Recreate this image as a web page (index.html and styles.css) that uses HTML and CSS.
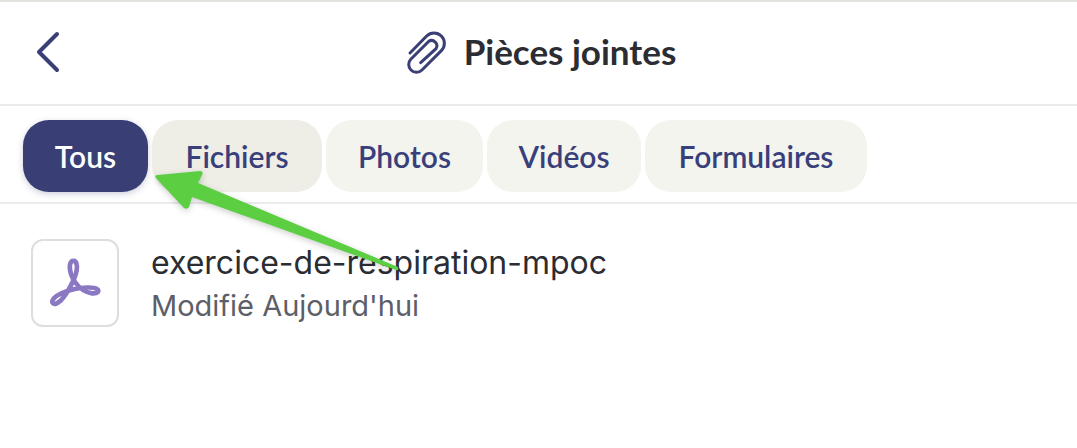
FILE: index.html
```html
<!DOCTYPE html>
<html lang="fr">
<head>
<meta charset="utf-8">
<meta name="viewport" content="width=device-width, initial-scale=1">
<title>Pièces jointes</title>
<link rel="stylesheet" href="styles.css">
</head>
<body>
<header class="header">
  <button class="back" type="button" aria-label="Retour">
    <svg class="back-icon" viewBox="0 0 28 44" aria-hidden="true"><path d="M23 4 5 22 23 40"/></svg>
  </button>
  <div class="heading">
    <svg class="clip-icon" viewBox="33 27 120 126" aria-hidden="true"><path d="M42 93 92 42A31 31 0 0 1 136 86L78 144A23 23 0 0 1 45 111L98 58A16 16 0 0 1 120 80L74 122"/></svg>
    <h1 class="title">Pièces jointes</h1>
  </div>
</header>
<nav class="tabs" aria-label="Filtres">
  <button class="tab tab-active" type="button">Tous</button>
  <button class="tab tab-hover" type="button">Fichiers</button>
  <button class="tab" type="button">Photos</button>
  <button class="tab" type="button">Vidéos</button>
  <button class="tab" type="button">Formulaires</button>
</nav>
<main class="files">
  <article class="file">
    <div class="thumb">
      <svg class="pdf-icon" viewBox="27 27 156 156" aria-hidden="true"><path d="M97 104C109 80 113 65 110 50C108 35 93 35 90 50C88 65 93 84 105 102C119 122 135 133 156 136C173 138 180 128 171 123C160 116 127 118 101 124C75 130 50 142 41 152C33 162 38 170 48 167C67 161 84 130 97 104Z"/></svg>
    </div>
    <div class="file-text">
      <h2 class="file-name">exercice-de-respiration-mpoc</h2>
      <p class="file-date">Modifié Aujourd'hui</p>
    </div>
  </article>
</main>
<svg class="arrow" viewBox="0 0 252 108" aria-hidden="true"><path d="M6 12Q4 9 8 9L50 5Q54 5 52 9L48 17L248 101Q249 105 246 104L42 31L39 41Q37 44 34 42Z"/></svg>
</body>
</html>
```
FILE: styles.css
```css
* { box-sizing: border-box; }
body {
  position: relative;
  margin: 0;
  min-height: 100vh;
  background: #fff;
  color: #2b2d33;
  font-family: Inter, "Liberation Sans", sans-serif;
}
button { border: 0; cursor: pointer; }
svg { display: block; fill: none; }
.header {
  display: grid;
  grid-template-columns: 1fr auto 1fr;
  align-items: center;
  height: 106px;
  padding: 0 26px 2px 32px;
  border-top: 2px solid #e2e2de;
  border-bottom: 2px solid #ebebeb;
}
.back { justify-self: start; padding: 0; background: none; }
.back-icon { width: 32px; height: 44px; }
.back-icon path { stroke: #3a3f75; stroke-width: 4; stroke-linecap: round; stroke-linejoin: round; }
.heading { display: flex; align-items: center; gap: 17px; }
.clip-icon { width: 40px; height: 42px; overflow: visible; }
.clip-icon path { stroke: #3a3f75; stroke-width: 9; stroke-linecap: round; }
.title { margin: 0; padding-bottom: 2px; font: 700 35px/48px Lato, sans-serif; }
.tabs {
  display: grid;
  grid-template-columns: 125px 170px 157px 154px 222px;
  gap: 4px;
  padding: 14px 23px 10px;
  border-bottom: 2px solid #ebebeb;
}
.tab {
  height: 72px;
  padding: 0;
  border-radius: 26px;
  background: #f3f4ee;
  color: #393f7b;
  font: 600 30px/40px Lato, sans-serif;
}
.tab-active { background: #393f75; color: #fff; box-shadow: 0 2px 6px #393f7540; }
.tab-hover { background: #eeeee7; }
.files { padding: 35px 31px; }
.file { display: flex; align-items: center; gap: 32px; }
.thumb {
  display: grid;
  place-items: center;
  width: 88px;
  height: 88px;
  border: 2px solid #dedede;
  border-radius: 12px;
}
.pdf-icon { width: 52px; height: 52px; }
.pdf-icon path { stroke: #8b78c3; stroke-width: 14; stroke-linejoin: round; }
.file-text { padding-top: 2px; }
.file-name { margin: 0; font-size: 32px; font-weight: 400; line-height: 44px; }
.file-date { margin: 0; color: #5c5f68; font-size: 29px; line-height: 42px; }
.arrow {
  position: absolute;
  top: 166px;
  left: 150px;
  width: 252px;
  height: 108px;
  filter: drop-shadow(0 2px 3px #0003);
  pointer-events: none;
}
.arrow path { fill: #5bce42; }
```
